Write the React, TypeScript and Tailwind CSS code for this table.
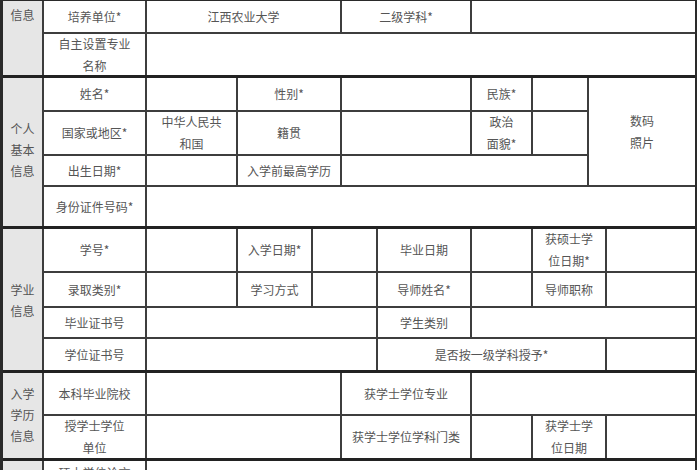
import type { ReactNode } from "react"

const cols = "grid grid-cols-[39px_101px_89px_73px_27px_34px_92px_59px_54px_16px_88px] gap-[2px] bg-[#3d3d3d]"

function Cell({ children, className = "" }: { children?: ReactNode; className?: string }) {
  return (
    <div className={`flex items-center justify-center text-center leading-[22px] bg-white ${className}`}>
      {children ? <div>{children}</div> : null}
    </div>
  )
}

function Label({ children, className = "" }: { children?: ReactNode; className?: string }) {
  return <Cell className={`bg-[#e4e4e4] ${className}`}>{children}</Cell>
}

function Category({ lines, className = "" }: { lines: string[]; className?: string }) {
  return (
    <div className={`flex flex-col items-center bg-[#e6e6e6] leading-[21px] ${className}`}>
      {lines.map((l, i) => (
        <div key={i}>{l}</div>
      ))}
    </div>
  )
}

export default function App() {
  return (
    <div
      className="w-[700px] h-[470px] overflow-hidden bg-white text-[12px] text-[#555]"
      style={{ fontFamily: '"Noto Sans CJK SC", "Noto Sans", sans-serif' }}
    >
      <div className="w-[697px] border-l-[3px] border-r-[2px] border-t border-[#2a2a2a]">
        {/* 学位信息 (top cut off) */}
        <div className={`${cols} grid-rows-[31px_41px]`}>
          <Category lines={["信息"]} className="row-span-2 justify-start pt-[3px]" />
          <Label>培养单位*</Label>
          <Cell className="col-span-3">江西农业大学</Cell>
          <Label className="col-span-2">二级学科*</Label>
          <Cell className="col-span-4" />
          <Label>
            自主设置专业
            <br />
            名称
          </Label>
          <Cell className="col-span-9" />
        </div>

        {/* 个人基本信息 */}
        <div className={`${cols} grid-rows-[32px_42px_29px_39px] border-t-[3px] border-[#222]`}>
          <Category lines={["个人", "基本", "信息"]} className="row-span-4 justify-center pb-[5px]" />
          <Label>姓名*</Label>
          <Cell />
          <Label className="col-span-2">性别*</Label>
          <Cell className="col-span-2" />
          <Label>民族*</Label>
          <Cell />
          <Cell className="col-span-2 row-span-3">
            数码
            <br />
            照片
          </Cell>
          <Label>国家或地区*</Label>
          <Cell>
            中华人民共
            <br />
            和国
          </Cell>
          <Label className="col-span-2">籍贯</Label>
          <Cell className="col-span-2" />
          <Label>
            政治
            <br />
            面貌*
          </Label>
          <Cell />
          <Label>出生日期*</Label>
          <Cell />
          <Label className="col-span-2">入学前最高学历</Label>
          <Cell className="col-span-4" />
          <Label>身份证件号码*</Label>
          <Cell className="col-span-9" />
        </div>

        {/* 学业信息 */}
        <div className={`${cols} grid-rows-[42px_33px_29px_31px] border-t-[3px] border-[#222]`}>
          <Category lines={["学业", "信息"]} className="row-span-4 justify-center" />
          <Label>学号*</Label>
          <Cell />
          <Label>入学日期*</Label>
          <Cell className="col-span-2" />
          <Label>毕业日期</Label>
          <Cell />
          <Cell className="col-span-2">
            获硕士学
            <br />
            位日期*
          </Cell>
          <Cell />
          <Label>录取类别*</Label>
          <Cell />
          <Label>学习方式</Label>
          <Cell className="col-span-2" />
          <Label>导师姓名*</Label>
          <Cell />
          <Cell className="col-span-2">导师职称</Cell>
          <Cell />
          <Label>毕业证书号</Label>
          <Cell className="col-span-4" />
          <Label>学生类别</Label>
          <Cell className="col-span-4" />
          <Label>学位证书号</Label>
          <Cell className="col-span-4" />
          <Label className="col-span-4">是否按一级学科授予*</Label>
          <Cell />
        </div>

        {/* 入学学历信息 */}
        <div className={`${cols} grid-rows-[41px_42px] border-t-[3px] border-[#222]`}>
          <Category lines={["入学", "学历", "信息"]} className="row-span-2 justify-center pb-[3px]" />
          <Label>本科毕业院校</Label>
          <Cell className="col-span-3" />
          <Label className="col-span-2">获学士学位专业</Label>
          <Cell className="col-span-4" />
          <Label>
            授学士学位
            <br />
            单位
          </Label>
          <Cell className="col-span-3" />
          <Label className="col-span-2">获学士学位学科门类</Label>
          <Cell />
          <Label className="col-span-2 bg-[#d3d3d3]">
            获学士学
            <br />
            位日期
          </Label>
          <Cell />
        </div>

        {/* 学位论文 (bottom cut off) */}
        <div className={`${cols} grid-rows-[44px] border-t-[3px] border-[#222]`}>
          <Category lines={[]} />
          <Label className="items-start pt-[1px]">
            硕士学位论文
            <br />
            题目
          </Label>
          <Cell className="col-span-9" />
        </div>
      </div>
    </div>
  )
}
